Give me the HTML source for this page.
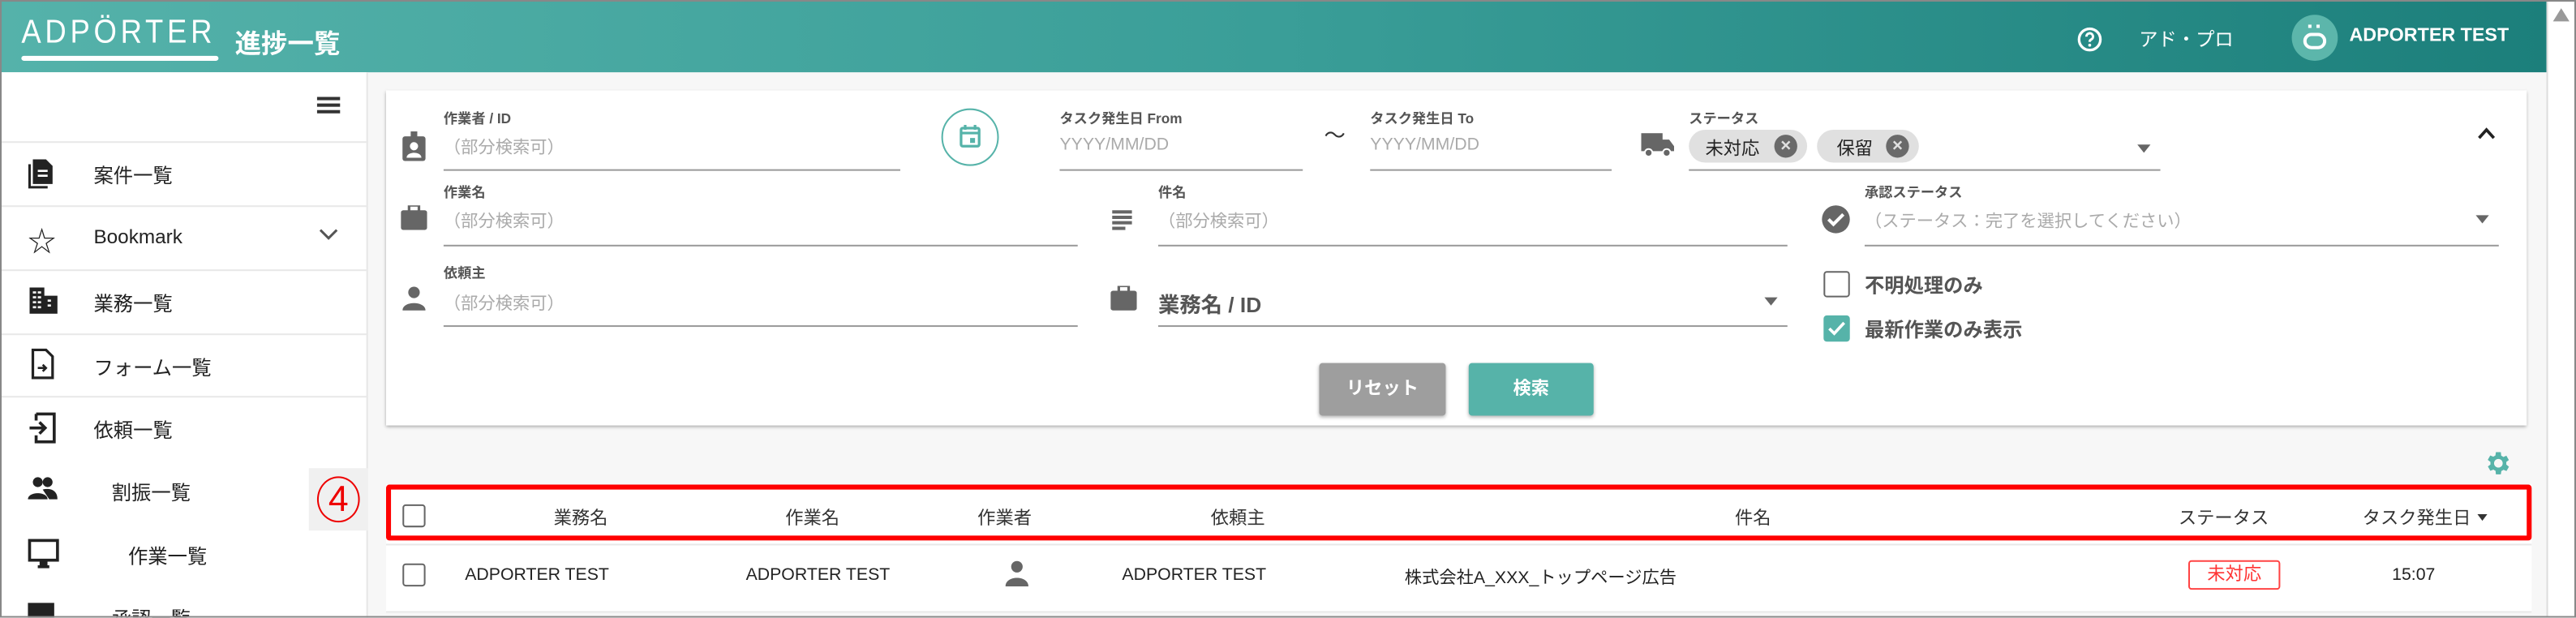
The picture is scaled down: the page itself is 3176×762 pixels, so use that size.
<!DOCTYPE html>
<html><head><meta charset="utf-8"><style>
*{box-sizing:border-box;margin:0;padding:0}
html,body{width:3176px;height:762px;overflow:hidden;background:#fff}
#w{position:absolute;left:0;top:0;width:1568px;height:376.2px;transform:scale(2.02551);transform-origin:0 0;font-family:"Liberation Sans","Noto Sans CJK JP",sans-serif;background:#f7f7f7;overflow:hidden}
.a{position:absolute;white-space:nowrap}
.hd{left:0;top:0;width:1550px;height:44px;background:linear-gradient(90deg,#55b2aa,#3a9e98 50%,#1c7f7b)}
.sb{left:0;top:44px;width:224px;height:340px;background:#fff;border-right:1px solid #e6e6e6}
.ln{position:absolute;left:0;width:224px;height:1px;background:#e8e8e8}
.si{position:absolute;font-size:12px;color:#222}
.lb{font-size:8.5px;color:#555;font-weight:bold}
.ph{font-size:10.5px;color:#aaa}
.ul{position:absolute;height:1px;background:#9a9a9a}
.th{font-size:11px;color:#333;top:307px}
.td{font-size:10.5px;color:#222;top:344px}
.cb{position:absolute;width:14px;height:14px;border:1.6px solid #666;border-radius:2px}
.ar{position:absolute;width:0;height:0;border-left:4.5px solid transparent;border-right:4.5px solid transparent;border-top:5px solid #666}
</style></head><body><div id="w">
<div class="a hd"></div>
<div class="a" style="left:13px;top:9px;font-size:20px;color:#fff;letter-spacing:2.6px;transform:scaleX(.9);transform-origin:0 0">ADPÖRTER</div>
<div class="a" style="left:13px;top:34px;width:120px;height:3px;border-radius:2px;background:#fff"></div>
<div class="a" style="left:143px;top:13px;font-size:16px;color:#fff;font-weight:bold">進捗一覧</div>
<svg class="a" style="left:1264px;top:16px" width="16" height="16" viewBox="0 0 16 16"><circle cx="8" cy="8" r="6.5" fill="none" stroke="#fff" stroke-width="1.6"/><path d="M6 6.3a2 2 0 1 1 2.8 1.8c-.6.3-.8.7-.8 1.4" fill="none" stroke="#fff" stroke-width="1.5"/><circle cx="8" cy="11.5" r=".9" fill="#fff"/></svg>
<div class="a" style="left:1302px;top:16px;font-size:11.5px;color:#fff">アド・プロ</div>
<div class="a" style="left:1395px;top:9px;width:28px;height:28px;border-radius:50%;background:#5cb6ab"></div>
<div class="a" style="left:1402px;top:20px;width:14px;height:10px;border:2.5px solid #fff;border-radius:5px"></div>
<div class="a" style="left:1405px;top:15px;width:2px;height:2px;background:#fff;box-shadow:5px 0 0 #fff"></div>
<div class="a" style="left:1430px;top:16px;font-size:11.5px;color:#fff;font-weight:bold">ADPORTER TEST</div>
<div class="a" style="left:1550px;top:0;width:18px;height:376px;background:#fff;border-left:1px solid #ddd"></div>
<div class="a" style="left:1554px;top:5px;border-left:5px solid transparent;border-right:5px solid transparent;border-bottom:8px solid #999;width:0;height:0"></div>

<div class="a sb"></div>
<div class="ln" style="top:86px"></div><div class="ln" style="top:125px"></div><div class="ln" style="top:164px"></div><div class="ln" style="top:203px"></div><div class="ln" style="top:241px"></div>
<div class="a" style="left:193px;top:59px;width:14px;height:2px;background:#333;box-shadow:0 4px 0 #333,0 8px 0 #333"></div>
<svg class="a" style="left:17px;top:95px" width="18" height="20" viewBox="0 0 18 20"><path d="M3 2h8l4 4v11H3z" fill="#222"/><path d="M1 5v14h11" fill="none" stroke="#222" stroke-width="1.5"/><path d="M6 9h6M6 12h6" stroke="#fff" stroke-width="1.3"/></svg>
<div class="si" style="left:57px;top:98px">案件一覧</div>
<div class="a" style="left:17px;top:133px;font-size:17px;color:#222">☆</div>
<div class="si" style="left:57px;top:137px">Bookmark</div>
<svg class="a" style="left:194px;top:139px" width="12" height="8" viewBox="0 0 12 8"><path d="M1 1l5 5 5-5" fill="none" stroke="#555" stroke-width="1.5"/></svg>
<svg class="a" style="left:18px;top:175px" width="17" height="16" viewBox="0 0 17 16"><path d="M0 0h9v16H0zM9 5h8v11H9z" fill="#222"/><path d="M2 3h2M5 3h2M2 6h2M5 6h2M2 9h2M5 9h2M2 12h2M5 12h2M11 8h2M11 11h2" stroke="#fff" stroke-width="1.3"/></svg>
<div class="si" style="left:57px;top:176px">業務一覧</div>
<svg class="a" style="left:19px;top:212px" width="14" height="19" viewBox="0 0 14 19"><path d="M1 1h8l4 4v13H1z" fill="none" stroke="#222" stroke-width="1.6"/><path d="M4 12h5M7 10l2 2-2 2" fill="none" stroke="#222" stroke-width="1.3"/></svg>
<div class="si" style="left:57px;top:215px">フォーム一覧</div>
<svg class="a" style="left:17px;top:251px" width="18" height="19" viewBox="0 0 18 19"><path d="M5 1h11v17H5v-4M5 5V1" fill="none" stroke="#222" stroke-width="1.8"/><path d="M1 9.5h9M7 6l3.5 3.5L7 13" fill="none" stroke="#222" stroke-width="1.8"/></svg>
<div class="si" style="left:57px;top:253px">依頼一覧</div>
<svg class="a" style="left:17px;top:290px" width="18" height="14" viewBox="0 0 18 14"><circle cx="6" cy="3.5" r="3" fill="#222"/><circle cx="12" cy="3.5" r="3" fill="#222"/><path d="M0 14c0-5 12-5 12 0zM9 8c4-1 9 0 9 6h-5" fill="#222"/></svg>
<div class="si" style="left:68px;top:291px">割振一覧</div>
<div class="a" style="left:188px;top:285px;width:36px;height:38px;background:#f0f0f0"></div>
<div class="a" style="left:193px;top:290px;width:26px;height:28px;border:1px solid #e00;border-radius:50%;color:#e00;font-size:22px;line-height:26px;text-align:center">4</div>
<svg class="a" style="left:17px;top:328px" width="19" height="18" viewBox="0 0 19 18"><rect x="1" y="1" width="17" height="12" fill="none" stroke="#222" stroke-width="1.8"/><path d="M8 13v3h3v-3M6 17h7" stroke="#222" stroke-width="1.8" fill="#222"/></svg>
<div class="si" style="left:78px;top:330px">作業一覧</div>
<div class="a" style="left:17px;top:367px;width:16px;height:10px;background:#222"></div>
<div class="si" style="left:68px;top:368px">承認一覧</div>

<div class="a" style="left:235px;top:55px;width:1303px;height:204px;background:#fff;box-shadow:0 1px 2px rgba(0,0,0,.35)"></div>
<svg class="a" style="left:244px;top:80px" width="16" height="18" viewBox="0 0 16 18"><rect x="1" y="3" width="14" height="15" rx="1.5" fill="#666"/><rect x="6" y="0" width="4" height="5" fill="#666"/><circle cx="8" cy="9" r="2.5" fill="#fff"/><path d="M3.5 16c0-4 9-4 9 0z" fill="#fff"/></svg>
<div class="a lb" style="left:270px;top:66px">作業者 / ID</div>
<div class="a ph" style="left:270px;top:82px">（部分検索可）</div>
<div class="ul" style="left:270px;top:103px;width:278px"></div>
<div class="a" style="left:573px;top:66px;width:35px;height:35px;border-radius:50%;border:1px solid #56b3a9"></div>
<svg class="a" style="left:584px;top:76px" width="13" height="14" viewBox="0 0 13 14"><rect x="1" y="2" width="11" height="11" rx="1" fill="none" stroke="#56b3a9" stroke-width="1.6"/><path d="M1 5h11M3.5 0v3M9.5 0v3" stroke="#56b3a9" stroke-width="1.6"/><rect x="6.5" y="8" width="3" height="3" fill="#56b3a9"/></svg>
<div class="a lb" style="left:645px;top:66px">タスク発生日 From</div>
<div class="a ph" style="left:645px;top:82px">YYYY/MM/DD</div>
<div class="ul" style="left:645px;top:103px;width:148px"></div>
<div class="a" style="left:806px;top:72px;font-size:13px;color:#333">〜</div>
<div class="a lb" style="left:834px;top:66px">タスク発生日 To</div>
<div class="a ph" style="left:834px;top:82px">YYYY/MM/DD</div>
<div class="ul" style="left:834px;top:103px;width:147px"></div>
<svg class="a" style="left:999px;top:81px" width="20" height="15" viewBox="0 0 20 15"><path d="M0 0h13v11H0zM13 4h4l3 4v3h-7z" fill="#666"/><circle cx="4.5" cy="12" r="2.3" fill="#666" stroke="#fff"/><circle cx="15.5" cy="12" r="2.3" fill="#666" stroke="#fff"/></svg>
<div class="a lb" style="left:1028px;top:66px">ステータス</div>
<div class="a" style="left:1028px;top:79px;width:72px;height:20px;border-radius:10px;background:#e0e0e0"></div>
<div class="a" style="left:1038px;top:82px;font-size:11px;color:#222">未対応</div>
<div class="a" style="left:1080px;top:82px;width:14px;height:14px;border-radius:50%;background:#6a6a6a;color:#e0e0e0;font-size:11px;line-height:14px;text-align:center;font-weight:bold">×</div>
<div class="a" style="left:1106px;top:79px;width:62px;height:20px;border-radius:10px;background:#e0e0e0"></div>
<div class="a" style="left:1118px;top:82px;font-size:11px;color:#222">保留</div>
<div class="a" style="left:1148px;top:82px;width:14px;height:14px;border-radius:50%;background:#6a6a6a;color:#e0e0e0;font-size:11px;line-height:14px;text-align:center;font-weight:bold">×</div>
<div class="ar" style="left:1301px;top:88px"></div>
<div class="ul" style="left:1028px;top:103px;width:287px"></div>
<svg class="a" style="left:1508px;top:77px" width="11" height="8" viewBox="0 0 11 8"><path d="M1 7l4.5-5 4.5 5" fill="none" stroke="#222" stroke-width="1.8"/></svg>
<svg class="a" style="left:244px;top:125px" width="16" height="15" viewBox="0 0 16 15"><rect x="0" y="3" width="16" height="12" rx="1.5" fill="#666"/><rect x="5" y="0" width="6" height="4" fill="none" stroke="#666" stroke-width="1.6"/></svg>
<div class="a lb" style="left:270px;top:111px">作業名</div>
<div class="a ph" style="left:270px;top:127px">（部分検索可）</div>
<div class="ul" style="left:270px;top:149px;width:386px"></div>
<div class="a" style="left:677px;top:128px;width:12px;height:1.7px;background:#666;box-shadow:0 3.3px 0 #666,0 6.6px 0 #666"></div>
<div class="a" style="left:677px;top:138px;width:8px;height:1.7px;background:#666"></div>
<div class="a lb" style="left:705px;top:111px">件名</div>
<div class="a ph" style="left:705px;top:127px">（部分検索可）</div>
<div class="ul" style="left:705px;top:149px;width:383px"></div>
<div class="a" style="left:1109px;top:125px;width:17px;height:17px;border-radius:50%;background:#666"></div>
<svg class="a" style="left:1111px;top:128px" width="13" height="11" viewBox="0 0 13 11"><path d="M2 5.5l3 3 6-6" fill="none" stroke="#fff" stroke-width="2"/></svg>
<div class="a lb" style="left:1135px;top:111px">承認ステータス</div>
<div class="a ph" style="left:1135px;top:127px">（ステータス：完了を選択してください）</div>
<div class="ar" style="left:1507px;top:131px"></div>
<div class="ul" style="left:1135px;top:149px;width:386px"></div>
<svg class="a" style="left:245px;top:174px" width="14" height="15" viewBox="0 0 14 15"><circle cx="7" cy="4" r="3.5" fill="#666"/><path d="M0 15c0-6 14-6 14 0z" fill="#666"/></svg>
<div class="a lb" style="left:270px;top:160px">依頼主</div>
<div class="a ph" style="left:270px;top:177px">（部分検索可）</div>
<div class="ul" style="left:270px;top:198px;width:386px"></div>
<svg class="a" style="left:676px;top:174px" width="16" height="15" viewBox="0 0 16 15"><rect x="0" y="3" width="16" height="12" rx="1.5" fill="#666"/><rect x="5" y="0" width="6" height="4" fill="none" stroke="#666" stroke-width="1.6"/></svg>
<div class="a" style="left:705px;top:175px;font-size:13px;color:#555;font-weight:bold">業務名 / ID</div>
<div class="ar" style="left:1074px;top:181px"></div>
<div class="ul" style="left:705px;top:198px;width:383px"></div>
<div class="cb" style="left:1110px;top:165px;width:16px;height:16px"></div>
<div class="a" style="left:1135px;top:165px;font-size:12px;color:#555;font-weight:bold">不明処理のみ</div>
<div class="a" style="left:1110px;top:192px;width:16px;height:16px;background:#56b3a9;border-radius:2px"></div>
<svg class="a" style="left:1111px;top:193px" width="14" height="14" viewBox="0 0 14 14"><path d="M2.5 7l3 3 6-6.5" fill="none" stroke="#fff" stroke-width="1.8"/></svg>
<div class="a" style="left:1135px;top:192px;font-size:12px;color:#555;font-weight:bold">最新作業のみ表示</div>
<div class="a" style="left:803px;top:221px;width:77px;height:32px;background:#9e9e9e;border-radius:2px;box-shadow:0 1px 2px rgba(0,0,0,.3);color:#fff;font-size:11px;font-weight:bold;text-align:center;line-height:32px">リセット</div>
<div class="a" style="left:894px;top:221px;width:76px;height:32px;background:#56b3a9;border-radius:2px;box-shadow:0 1px 2px rgba(0,0,0,.3);color:#fff;font-size:11px;font-weight:bold;text-align:center;line-height:32px">検索</div>

<svg class="a" style="left:1511px;top:273px" width="18" height="18" viewBox="0 0 24 24"><path fill="#56b3a9" d="M19.4 13a7.5 7.5 0 0 0 0-2l2.1-1.6-2-3.5-2.5 1a7.3 7.3 0 0 0-1.7-1L15 3h-4l-.4 2.7c-.6.3-1.2.6-1.7 1l-2.5-1-2 3.5L6.6 11a7.5 7.5 0 0 0 0 2l-2.1 1.6 2 3.5 2.5-1c.5.4 1.1.7 1.7 1L11 21h4l.4-2.7c.6-.3 1.2-.6 1.7-1l2.5 1 2-3.5zM13 15.5a3.5 3.5 0 1 1 0-7 3.5 3.5 0 0 1 0 7z"/></svg>

<div class="a" style="left:235px;top:295px;width:1306px;height:78px;background:#fff"></div>
<div class="a" style="left:235px;top:295px;width:1306px;height:34px;border:3px solid #f00;border-radius:2px"></div>
<div class="cb" style="left:245px;top:307px"></div>
<div class="a th" style="left:337px">業務名</div>
<div class="a th" style="left:478px">作業名</div>
<div class="a th" style="left:595px">作業者</div>
<div class="a th" style="left:737px">依頼主</div>
<div class="a th" style="left:1056px">件名</div>
<div class="a th" style="left:1326px">ステータス</div>
<div class="a th" style="left:1438px">タスク発生日</div>
<div class="ar" style="left:1508px;top:313px;border-top-color:#333;border-left-width:3.5px;border-right-width:3.5px;border-top-width:4px"></div>
<div class="a" style="left:235px;top:331px;width:1306px;height:1px;background:#e8e8e8"></div>
<div class="cb" style="left:245px;top:343px"></div>
<div class="a td" style="left:283px">ADPORTER TEST</div>
<div class="a td" style="left:454px">ADPORTER TEST</div>
<svg class="a" style="left:612px;top:341px" width="14" height="16" viewBox="0 0 14 16"><circle cx="7" cy="4" r="3.5" fill="#666"/><path d="M0 16c0-7 14-7 14 0z" fill="#666"/></svg>
<div class="a td" style="left:683px">ADPORTER TEST</div>
<div class="a td" style="left:855px">株式会社A_XXX_トップページ広告</div>
<div class="a" style="left:1332px;top:341px;width:56px;height:18px;border:1px solid #f44;border-radius:2px;color:#f33;font-size:11px;text-align:center;line-height:16px">未対応</div>
<div class="a td" style="left:1456px">15:07</div>
<div class="a" style="left:235px;top:372px;width:1306px;height:1px;background:#e8e8e8"></div>
<div class="a" style="left:0;top:0;width:1568px;height:376.2px;border:1.5px solid #888;pointer-events:none"></div>
</div></body></html>
